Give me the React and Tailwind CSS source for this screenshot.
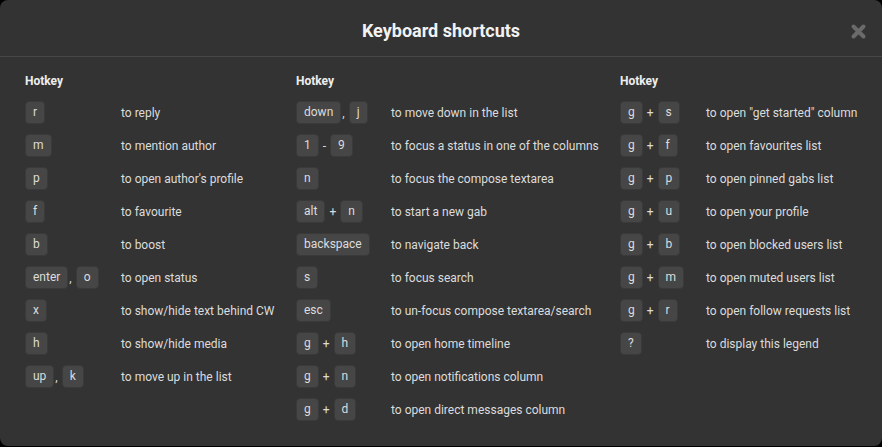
import React from 'react';

// columns of the shortcut legend
const COLS = [
  {
    width: 'w-[271px]',
    keyW: 'w-[96px]',
    rows: [
      [['r'], 'to reply'],
      [['m'], 'to mention author'],
      [['p'], "to open author's profile"],
      [['f'], 'to favourite'],
      [['b'], 'to boost'],
      [['enter', ',', 'o'], 'to open status'],
      [['x'], 'to show/hide text behind CW'],
      [['h'], 'to show/hide media'],
      [['up', ',', 'k'], 'to move up in the list'],
    ],
  },
  {
    width: 'w-[324px]',
    keyW: 'w-[95px]',
    rows: [
      [['down', ',', 'j'], 'to move down in the list'],
      [['1', '-', '9'], 'to focus a status in one of the columns'],
      [['n'], 'to focus the compose textarea'],
      [['alt', '+', 'n'], 'to start a new gab'],
      [['backspace'], 'to navigate back'],
      [['s'], 'to focus search'],
      [['esc'], 'to un-focus compose textarea/search'],
      [['g', '+', 'h'], 'to open home timeline'],
      [['g', '+', 'n'], 'to open notifications column'],
      [['g', '+', 'd'], 'to open direct messages column'],
    ],
  },
  {
    width: 'flex-1',
    keyW: 'w-[86px]',
    rows: [
      [['g', '+', 's'], 'to open "get started" column'],
      [['g', '+', 'f'], 'to open favourites list'],
      [['g', '+', 'p'], 'to open pinned gabs list'],
      [['g', '+', 'u'], 'to open your profile'],
      [['g', '+', 'b'], 'to open blocked users list'],
      [['g', '+', 'm'], 'to open muted users list'],
      [['g', '+', 'r'], 'to open follow requests list'],
      [['?'], 'to display this legend'],
    ],
  },
];

function Kbd({ children }) {
  return (
    <span className="inline-block rounded-[4px] border border-[#3a3a3a] bg-[#464646] px-[7px] py-[3px] leading-[15px] text-[#dcdcdc]">
      {children}
    </span>
  );
}

function Keys({ keys }) {
  return (
    <div className="flex items-center">
      {keys.map((k, i) => {
        if (k === ',') return <span key={i} className="ml-[1px] mr-[4px] text-[#dcdcdc]">,</span>;
        if (k === '+') return <span key={i} className="mx-[4px] text-[#dcdcdc]">+</span>;
        if (k === '-') return <span key={i} className="mx-[4px] text-[#dcdcdc]">-</span>;
        return <Kbd key={i}>{k}</Kbd>;
      })}
    </div>
  );
}

export default function App() {
  return (
    <div className="h-[447px] w-[882px] overflow-hidden bg-black" style={{ fontFamily: 'Roboto, "Liberation Sans", sans-serif' }}>
      <div className="h-[446px] rounded-lg bg-[#333333]">
        {/* Header */}
        <div className="relative h-[57px] border-b border-[#474747] pt-[21px] text-center">
          <h1 className="text-[18px] font-bold leading-[20px] text-[#f2f2f2]">Keyboard shortcuts</h1>
          <button className="absolute right-[15px] top-[23px] text-[#6a6a6a]">
            <svg width="17" height="17" viewBox="0 0 17 17">
              <path d="M3.5 3.5 L13.5 13.5 M13.5 3.5 L3.5 13.5" stroke="currentColor" strokeWidth="4" strokeLinecap="round" />
            </svg>
          </button>
        </div>

        {/* Body */}
        <div className="flex pl-[25px] pt-[14px] text-[12px]">
          {COLS.map((col, ci) => (
            <div key={ci} className={col.width}>
              <div className="mb-[10px] text-[12px] font-bold leading-[20px] text-[#eeeeee]">Hotkey</div>
              <div className="flex flex-col gap-[10px]">
                {col.rows.map(([keys, desc], ri) => (
                  <div key={ri} className="flex h-[23px] items-center">
                    <div className={`${col.keyW} shrink-0`}>
                      <Keys keys={keys} />
                    </div>
                    <div className="whitespace-nowrap text-[#dcdcdc]">{desc}</div>
                  </div>
                ))}
              </div>
            </div>
          ))}
        </div>
      </div>
    </div>
  );
}
